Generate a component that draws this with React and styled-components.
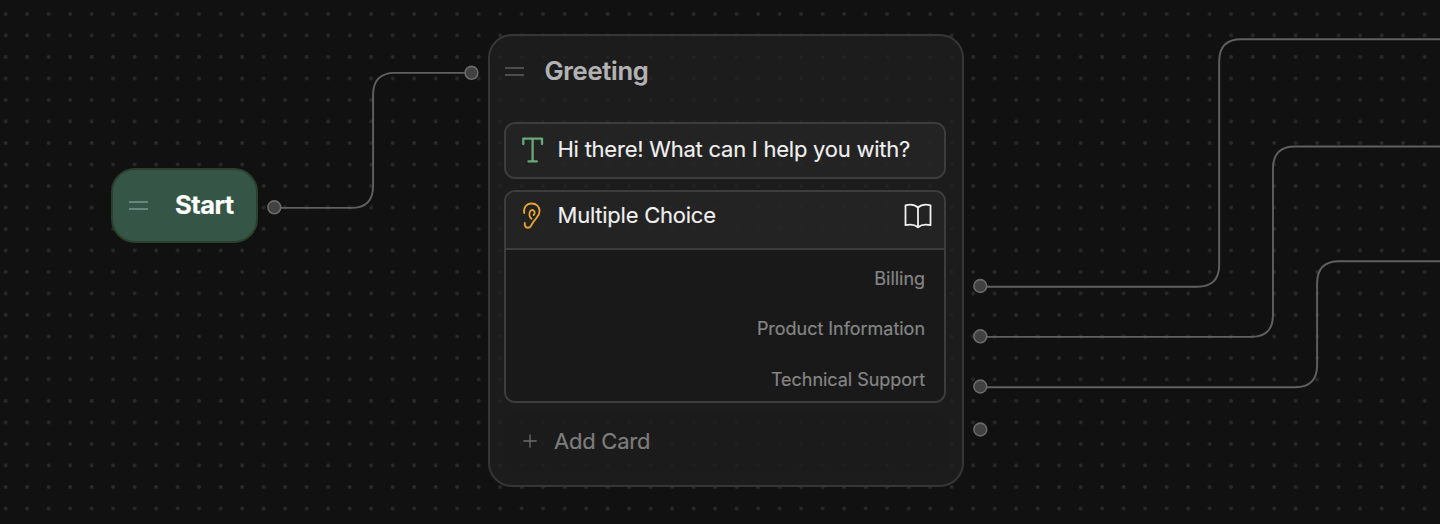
import React from "react";
import styled, { createGlobalStyle } from "styled-components";

const Global = createGlobalStyle`
  * { box-sizing: border-box; }
  body { margin: 0; background: #111; font-family: Inter, sans-serif; }
`;

const Canvas = styled.main`
  position: relative;
  width: 1440px;
  height: 524px;
  overflow: hidden;
  background-color: #111;
  background-image: radial-gradient(circle at center, #2b2b2b 0, #2b2b2b 1.3px, transparent 2.4px);
  background-size: 21.5px 21.5px;
  background-position: -5.1px 3.2px;
`;

const Wires = styled.svg`
  position: absolute;
  inset: 0;
  fill: none;
  stroke: #606060;
  stroke-width: 1.9;
  pointer-events: none;

  circle {
    fill: #414141;
    stroke: #6a6a6a;
    stroke-width: 1.6;
  }
`;

const Node = styled.section`
  position: absolute;
  left: ${(p) => p.$x}px;
  top: ${(p) => p.$y}px;
`;

const StartNode = styled(Node)`
  display: flex;
  align-items: center;
  gap: 27px;
  width: 147px;
  height: 75px;
  padding: 0 0 0 16px;
  border: 2px solid #2b402d;
  border-radius: 24px;
  background: #355546;
`;

const StepNode = styled(Node)`
  width: 476px;
  height: 453px;
  padding: 0 16px 0 14px;
  border: 2px solid #363636;
  border-radius: 24px;
  background: rgba(32, 32, 32, 0.75);
`;

const Grip = styled.span`
  flex: none;
  width: 19px;
  height: 9px;
  border: solid ${(p) => p.$color};
  border-width: 2px 0;
`;

const Title = styled.h2`
  margin: 0;
  padding-bottom: 1px;
  font-size: 25.5px;
  line-height: 30px;
  font-weight: ${(p) => p.$weight || 600};
  letter-spacing: ${(p) => p.$spacing}px;
  color: ${(p) => p.$color};
  -webkit-text-stroke: 0.2px ${(p) => p.$color};
`;

const StepHeader = styled.header`
  display: flex;
  align-items: center;
  gap: 20.5px;
  height: 86px;
  padding: 0 0 15px 1px;
`;

const Card = styled.article`
  width: 442px;
  margin-bottom: 11px;
  border: 2px solid #3d3d3d;
  border-radius: 11px;
  overflow: hidden;
`;

const CardHeader = styled.div`
  display: flex;
  align-items: center;
  height: ${(p) => p.$height}px;
  padding: 0 12px ${(p) => p.$lift}px 16px;
  background: rgba(40, 40, 40, 0.65);
`;

const CardLabel = styled.span`
  flex: 1;
  margin-left: 13.5px;
  padding-bottom: 2px;
  font-size: 22px;
  line-height: 28px;
  letter-spacing: -0.24px;
  color: #f0f0f0;
  -webkit-text-stroke: 0.12px #f0f0f0;
  white-space: nowrap;
`;

const Choices = styled.ul`
  margin: 0;
  padding: 3px 0 0;
  height: 153px;
  list-style: none;
  border-top: 2px solid #3d3d3d;
  background: #191919;
`;

const Choice = styled.li`
  height: 50.4px;
  padding: 14px 19px 0 0;
  text-align: right;
  font-size: 18px;
  line-height: 24px;
  letter-spacing: -0.03px;
  color: #858585;
  -webkit-text-stroke: 0.2px #858585;
`;

const AddCard = styled.button`
  display: flex;
  align-items: center;
  gap: 17px;
  width: 442px;
  height: 57px;
  padding: 0 0 3px 19px;
  border: 0;
  border-radius: 11px;
  background: rgba(28, 28, 28, 0.3);
  font: 400 22px/28px Inter, sans-serif;
  letter-spacing: -0.24px;
  color: #7d7d7d;
  -webkit-text-stroke: 0.2px #7d7d7d;
`;

const Icon = styled.svg`
  flex: none;
  fill: none;
  stroke: ${(p) => p.$color};
  stroke-width: ${(p) => p.$stroke || 2};
  stroke-linecap: round;
  stroke-linejoin: round;
`;

const TextIcon = () => (
  <Icon width="22" height="28" viewBox="0 0 22 28" $color="#68a879" $stroke="2.3">
    <path d="M1.3 8V2.6h18.700V8M10.6 2.6v22.800M6.500 25.400h8.300" />
  </Icon>
);

const EarIcon = () => (
  <Icon width="22" height="28" viewBox="0 0 22 28" $color="#e8a433" $stroke="1.8">
    <path d="M2.2 11C1.1 5.6 4.6 1.500 9.600 1.500c4.800 0 8 3.300 8 7.600 0 3-1.200 4.900-3.400 7.200-2.500 2.600-3.500 4.200-4.700 6.700-1 2.100-2.600 3.100-4.300 2.600-2-.5-2.700-2.300-2.400-4.600" />
    <path d="M9.5 16.800c-2-1.600-2.400-4.300-1.800-6.600.5-1.900 2.400-2.800 3.800-1.800 1.700 1.200 1.400 3.300.1 4.600" />
  </Icon>
);

const BookIcon = () => (
  <Icon width="28" height="26" viewBox="0 0 28 26" $color="#f0f0f0" $stroke="1.8">
    <path d="M14 4.500C10.800 1.600 5.600 1.300 1.500 2.400v19.800c4.200-1.100 9-.9 12.500 2 3.500-2.900 8.300-3.100 12.500-2V2.400C22.400 1.300 17.200 1.600 14 4.500v19.700" />
  </Icon>
);

const PlusIcon = () => (
  <Icon width="14" height="14" viewBox="0 0 14 14" $color="#6c6c6c" $stroke="1.3">
    <path d="M7 .8v12.400M.8 7h12.400" />
  </Icon>
);

const ports = [
  [274.3, 207.3],
  [471.5, 72.8],
  [980.3, 286],
  [980.3, 336.3],
  [980.3, 386.5],
  [980.3, 429.5],
];

const wires = [
  { x: 281, from: 207.9, bend: 373.1, to: 72.9, end: 465 },
  { x: 987, from: 286.8, bend: 1219.2, to: 39.2, end: 1440 },
  { x: 987, from: 336.9, bend: 1273, to: 146.5, end: 1440 },
  { x: 987, from: 387.2, bend: 1317.1, to: 261.2, end: 1440 },
];

const wirePath = ({ x, from, bend, to, end }, r = 22) =>
  `M${x} ${from}H${bend - r}Q${bend} ${from} ${bend} ${from - r}V${to + r}Q${bend} ${to} ${bend + r} ${to}H${end}`;

export default function App() {
  return (
    <>
      <Global />
      <Canvas>
        <Wires width="1440" height="524" viewBox="0 0 1440 524">
          {wires.map((w) => (
            <path key={w.bend} d={wirePath(w)} />
          ))}
          {ports.map(([cx, cy]) => (
            <circle key={`${cx}-${cy}`} cx={cx} cy={cy} r="6.4" />
          ))}
        </Wires>

        <StartNode $x={111} $y={168}>
          <Grip $color="#66877a" />
          <Title $color="#fff" $weight={700} $spacing={-0.5}>Start</Title>
        </StartNode>

        <StepNode $x={488} $y={34}>
          <StepHeader>
            <Grip $color="#4d4d4d" />
            <Title $color="#b3b3b3" $spacing={-0.27}>Greeting</Title>
          </StepHeader>
          <Card>
            <CardHeader $height={53} $lift={1}>
              <TextIcon />
              <CardLabel>Hi there! What can I help you with?</CardLabel>
            </CardHeader>
          </Card>
          <Card>
            <CardHeader $height={56} $lift={9}>
              <EarIcon />
              <CardLabel>Multiple Choice</CardLabel>
              <BookIcon />
            </CardHeader>
            <Choices>
              <Choice>Billing</Choice>
              <Choice>Product Information</Choice>
              <Choice>Technical Support</Choice>
            </Choices>
          </Card>
          <AddCard>
            <PlusIcon />
            Add Card
          </AddCard>
        </StepNode>
      </Canvas>
    </>
  );
}
